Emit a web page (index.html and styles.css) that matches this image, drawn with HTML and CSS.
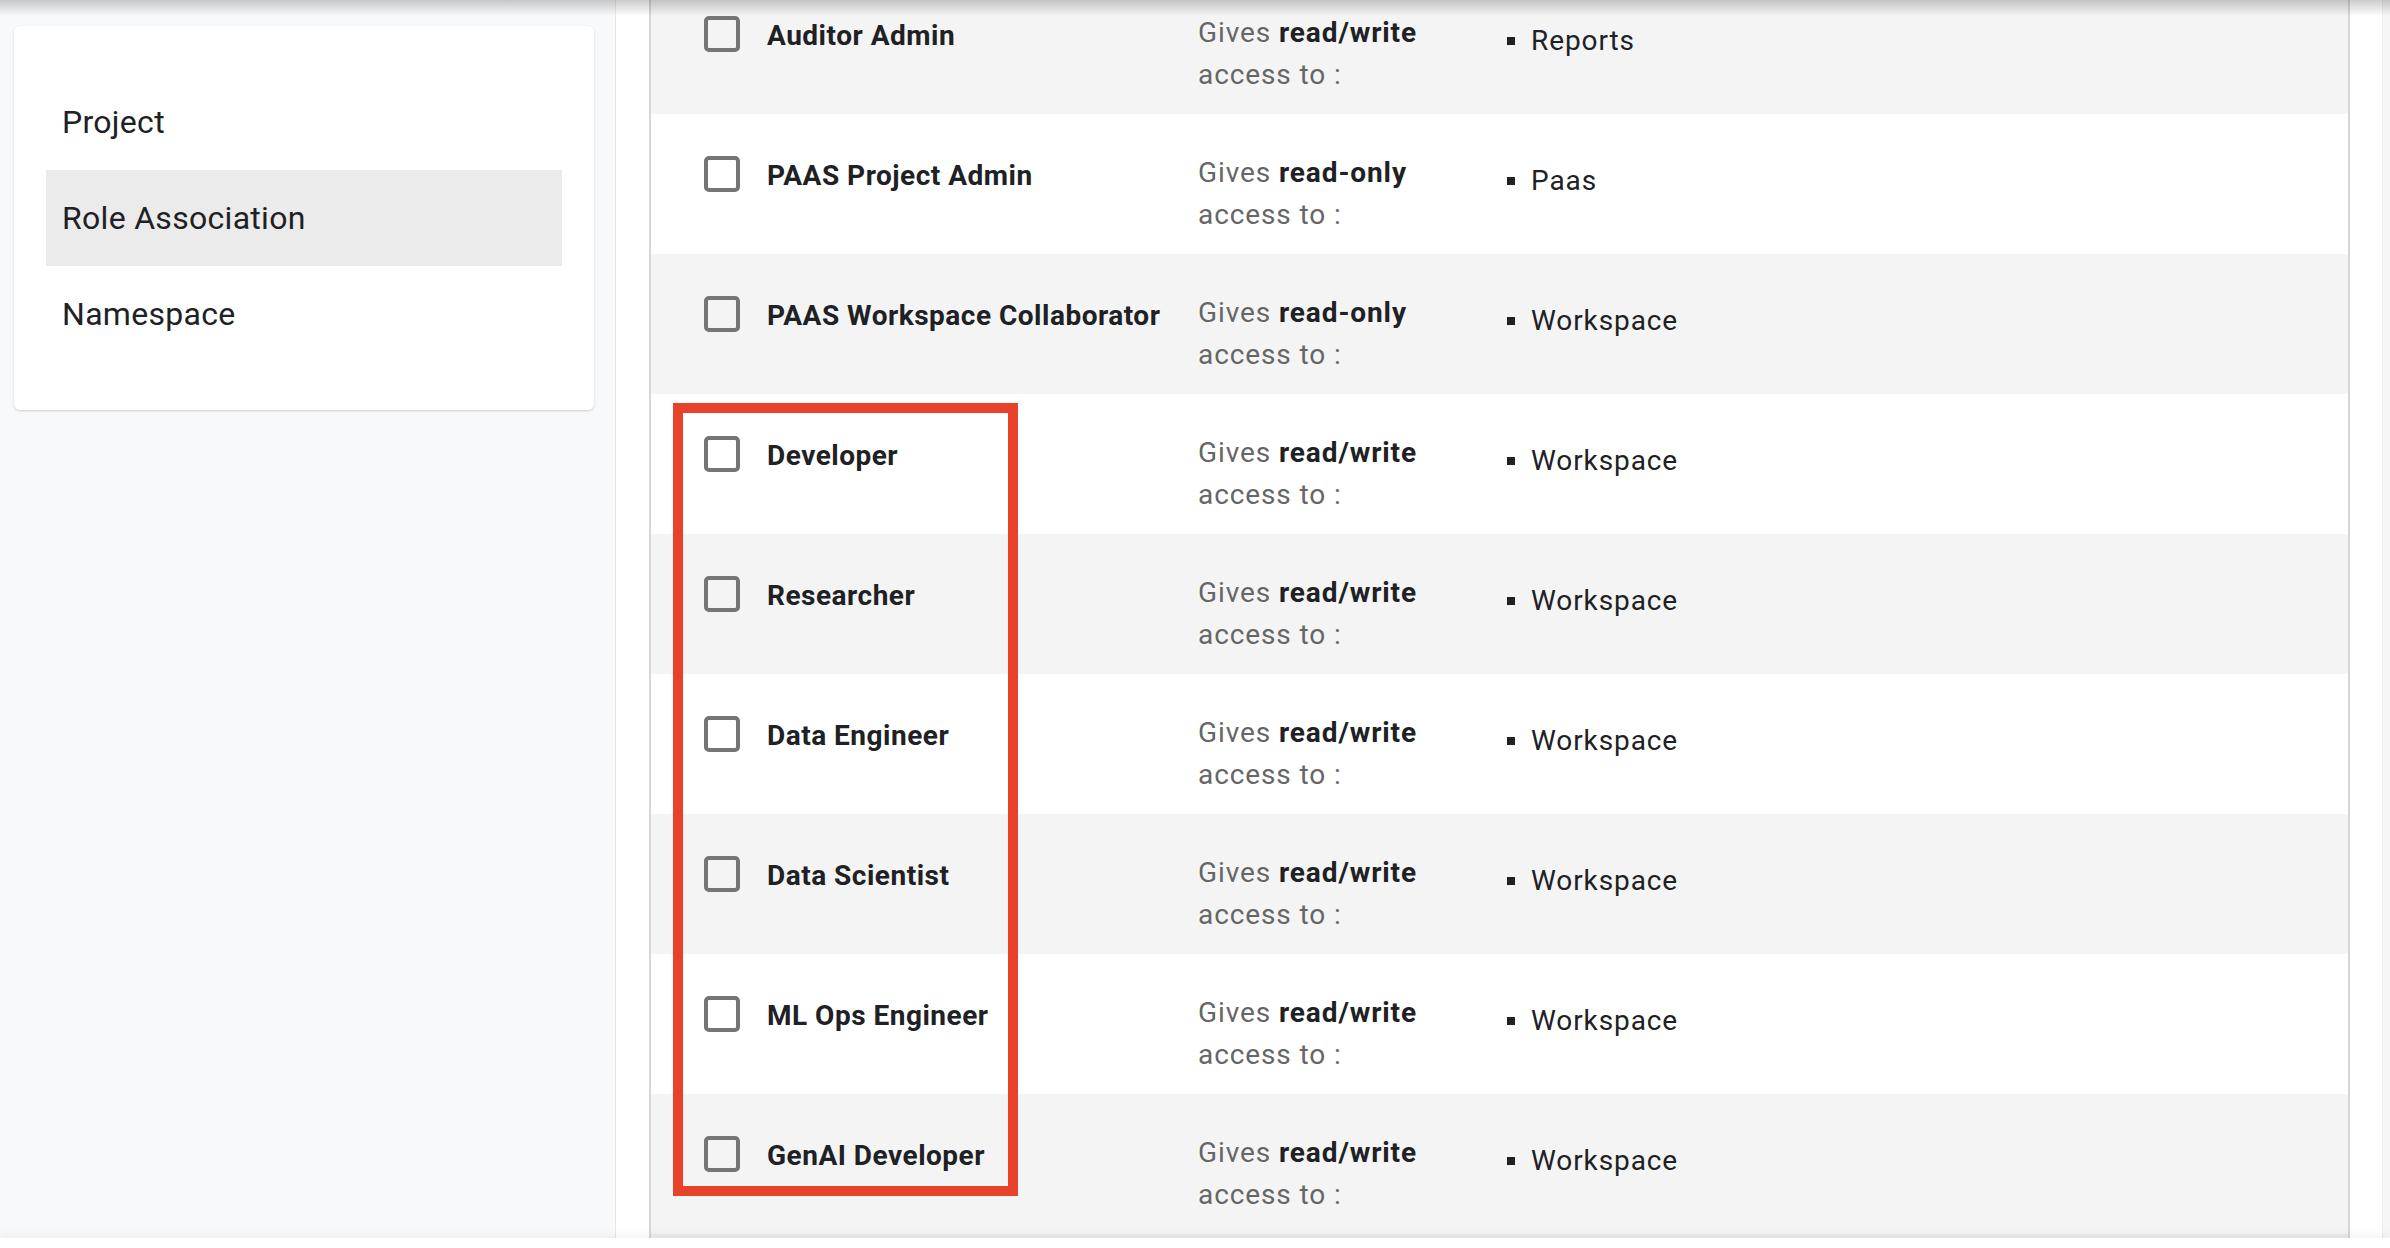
FILE: index.html
```html
<!DOCTYPE html>
<html lang="en">
<head>
<meta charset="utf-8">
<title>Role Association</title>
<link rel="stylesheet" href="styles.css">
</head>
<body>
<div class="page">
  <div class="main">
    <aside class="sidebar">
      <nav class="card">
        <div class="nav-item">Project</div>
        <div class="nav-item active">Role Association</div>
        <div class="nav-item">Namespace</div>
      </nav>
    </aside>
    <section class="content">
      <div class="table">
        <div class="rows">
          <div class="row">
            <span class="check"></span>
            <span class="name">Auditor Admin</span>
            <span class="desc">Gives <b>read/write</b><br>access to :</span>
            <ul class="targets"><li>Reports</li></ul>
          </div>
          <div class="row">
            <span class="check"></span>
            <span class="name">PAAS Project Admin</span>
            <span class="desc">Gives <b>read-only</b><br>access to :</span>
            <ul class="targets"><li>Paas</li></ul>
          </div>
          <div class="row">
            <span class="check"></span>
            <span class="name">PAAS Workspace Collaborator</span>
            <span class="desc">Gives <b>read-only</b><br>access to :</span>
            <ul class="targets"><li>Workspace</li></ul>
          </div>
          <div class="row">
            <span class="check"></span>
            <span class="name">Developer</span>
            <span class="desc">Gives <b>read/write</b><br>access to :</span>
            <ul class="targets"><li>Workspace</li></ul>
          </div>
          <div class="row">
            <span class="check"></span>
            <span class="name">Researcher</span>
            <span class="desc">Gives <b>read/write</b><br>access to :</span>
            <ul class="targets"><li>Workspace</li></ul>
          </div>
          <div class="row">
            <span class="check"></span>
            <span class="name">Data Engineer</span>
            <span class="desc">Gives <b>read/write</b><br>access to :</span>
            <ul class="targets"><li>Workspace</li></ul>
          </div>
          <div class="row">
            <span class="check"></span>
            <span class="name">Data Scientist</span>
            <span class="desc">Gives <b>read/write</b><br>access to :</span>
            <ul class="targets"><li>Workspace</li></ul>
          </div>
          <div class="row">
            <span class="check"></span>
            <span class="name">ML Ops Engineer</span>
            <span class="desc">Gives <b>read/write</b><br>access to :</span>
            <ul class="targets"><li>Workspace</li></ul>
          </div>
          <div class="row">
            <span class="check"></span>
            <span class="name">GenAI Developer</span>
            <span class="desc">Gives <b>read/write</b><br>access to :</span>
            <ul class="targets"><li>Workspace</li></ul>
          </div>
        </div>
        <div class="highlight"></div>
      </div>
    </section>
    <div class="scrollbar"></div>
  </div>
  <div class="footer"></div>
  <div class="top-shadow"></div>
</div>
</body>
</html>
```

FILE: styles.css
```css
html, body {
  margin: 0;
  padding: 0;
  height: 100%;
}

body {
  font-family: Roboto, "Liberation Sans", Arial, sans-serif;
  color: #202124;
  background: #ffffff;
  overflow: hidden;
}

.page {
  position: relative;
  width: 2390px;
  height: 1248px;
  display: flex;
  flex-direction: column;
}

.main {
  display: flex;
  height: 1238px;
  overflow: hidden;
}

.sidebar {
  width: 616px;
  flex: none;
  background: #f8f9fa;
  border-right: 1px solid #e6e7e9;
  padding: 26px 0 0 14px;
  box-sizing: border-box;
}

.card {
  width: 580px;
  height: 384px;
  box-sizing: border-box;
  background: #ffffff;
  border-radius: 6px;
  box-shadow: 0 1px 3px rgba(0, 0, 0, 0.12), 0 1px 2px rgba(0, 0, 0, 0.06);
  padding: 48px 32px;
}

.nav-item {
  height: 96px;
  display: flex;
  align-items: center;
  padding-left: 16px;
  font-size: 32px;
  letter-spacing: 0.3px;
  color: #202124;
}

.nav-item.active {
  background: #ebebeb;
}

.content {
  flex: 1;
  background: #ffffff;
  padding: 0 32px 0 33px;
  min-width: 0;
}

.table {
  position: relative;
  height: 100%;
  border-left: 2px solid #d6d6d6;
  border-right: 2px solid #d6d6d6;
  overflow: hidden;
  background: #ececec;
}

.rows {
  margin-top: -26px;
}

.row {
  height: 140px;
  box-sizing: border-box;
  display: flex;
  align-items: flex-start;
  padding: 38px 0 0 53px;
  background: #f4f4f4;
}

.row:nth-child(even) {
  background: #ffffff;
}

.check {
  width: 36px;
  height: 36px;
  box-sizing: border-box;
  border: 4px solid #757575;
  border-radius: 5px;
  flex: none;
  margin-top: 4px;
}

.name {
  width: 431px;
  margin-left: 27px;
  flex: none;
  font-size: 28px;
  line-height: 42px;
  font-weight: 700;
  letter-spacing: 0.5px;
  color: #202124;
  padding-top: 3px;
}

.desc {
  width: 309px;
  flex: none;
  font-size: 28px;
  line-height: 42px;
  letter-spacing: 0.9px;
  color: #666666;
}

.desc b {
  color: #202124;
  font-weight: 700;
}

.targets {
  list-style: none;
  margin: 0;
  padding: 8px 0 0 0;
}

.targets li {
  display: flex;
  align-items: center;
  font-size: 28px;
  line-height: 42px;
  letter-spacing: 0.9px;
  color: #202124;
}

.targets li::before {
  content: "";
  width: 8px;
  height: 8px;
  background: #202124;
  margin-right: 16px;
  flex: none;
}

.highlight {
  position: absolute;
  left: 22px;
  top: 403px;
  width: 345px;
  height: 793px;
  box-sizing: border-box;
  border: 10px solid #e8422a;
  pointer-events: none;
}

.scrollbar {
  width: 8px;
  flex: none;
  background: #f6f6f6;
  border-left: 1px solid #ececec;
  box-sizing: border-box;
}

.footer {
  height: 10px;
  background: #ffffff;
  box-shadow: 0 -3px 10px rgba(0, 0, 0, 0.06);
  position: relative;
}

.top-shadow {
  position: absolute;
  left: 0;
  top: 0;
  width: 100%;
  height: 16px;
  background: linear-gradient(to bottom, rgba(0, 0, 0, 0.2), rgba(0, 0, 0, 0));
  pointer-events: none;
}
```
